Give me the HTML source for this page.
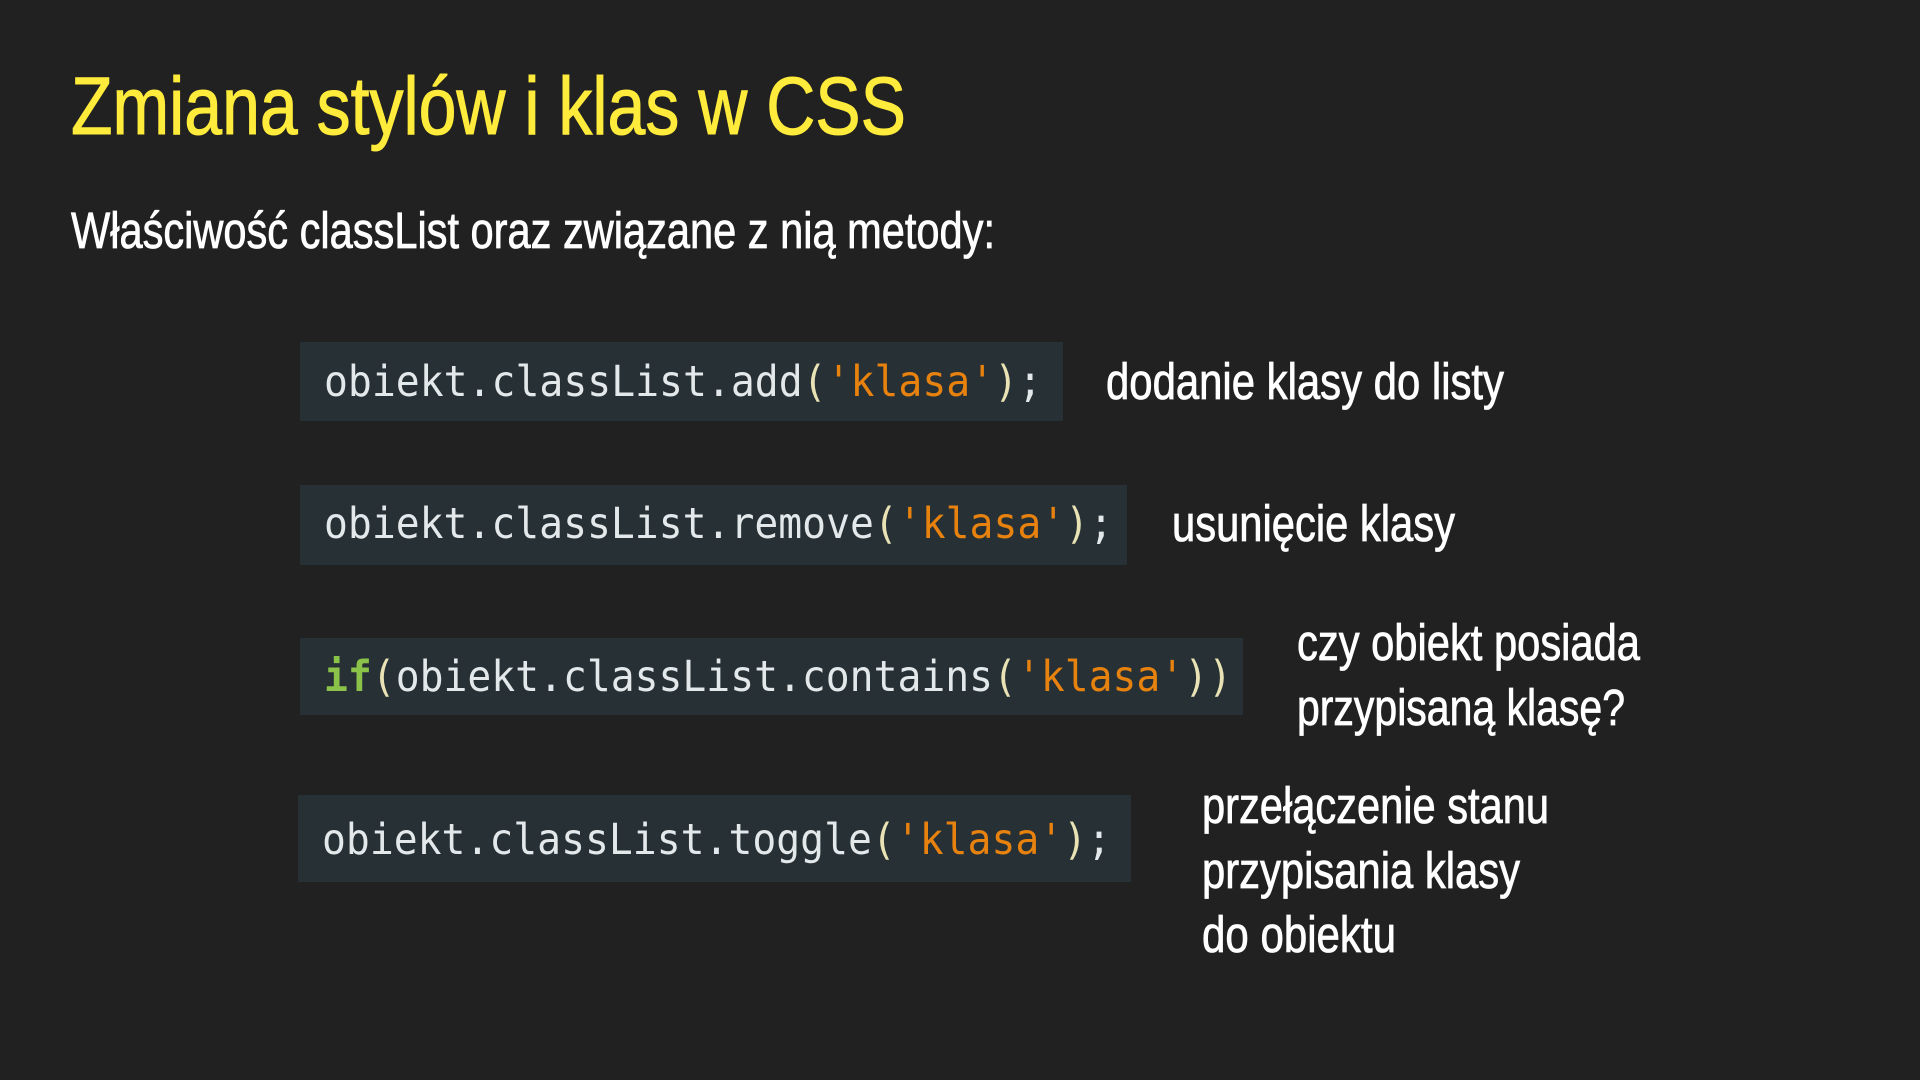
<!DOCTYPE html>
<html><head><meta charset="utf-8"><style>
html,body{margin:0;padding:0;background:#212121;}
svg{display:block}
.s{font-family:"Liberation Sans Narrow","Liberation Sans",sans-serif;fill:#fff;stroke:#fff;stroke-width:0.8px}
.m{font-family:"DejaVu Sans Mono","Liberation Mono",monospace;font-size:43px;fill:#e3e8ea}
.o{fill:#e8820f}.p{fill:#e9e2b4}.g{fill:#8bc34a;font-weight:bold}
</style></head><body>
<svg width="1920" height="1080" viewBox="0 0 1920 1080" xmlns="http://www.w3.org/2000/svg">
<rect width="1920" height="1080" fill="#212121"/>
<text class="s" x="71" y="134" font-size="82" style="fill:#ffeb3b;stroke:#ffeb3b;stroke-width:1px" textLength="835" lengthAdjust="spacingAndGlyphs">Zmiana stylów i klas w CSS</text>
<text class="s" x="71" y="248" font-size="51" textLength="924" lengthAdjust="spacingAndGlyphs">Właściwość classList oraz związane z nią metody:</text>

<rect x="300" y="342" width="763" height="79" fill="#263035"/>
<rect x="300" y="485" width="827" height="80" fill="#263035"/>
<rect x="300" y="638" width="943" height="77" fill="#263035"/>
<rect x="298" y="795" width="833" height="87" fill="#263035"/>

<text class="m" x="324" y="396" textLength="718" lengthAdjust="spacingAndGlyphs">obiekt.classList.add<tspan class="p">(</tspan><tspan class="o">'klasa'</tspan><tspan class="p">)</tspan>;</text>
<text class="m" x="324" y="538" textLength="789" lengthAdjust="spacingAndGlyphs">obiekt.classList.remove<tspan class="p">(</tspan><tspan class="o">'klasa'</tspan><tspan class="p">)</tspan>;</text>
<text class="m" x="324" y="691" textLength="908" lengthAdjust="spacingAndGlyphs"><tspan class="g">if</tspan><tspan class="p">(</tspan>obiekt.classList.contains<tspan class="p">(</tspan><tspan class="o">'klasa'</tspan><tspan class="p">))</tspan></text>
<text class="m" x="322" y="854" textLength="789" lengthAdjust="spacingAndGlyphs">obiekt.classList.toggle<tspan class="p">(</tspan><tspan class="o">'klasa'</tspan><tspan class="p">)</tspan>;</text>

<text class="s" x="1106" y="399" font-size="51" textLength="398" lengthAdjust="spacingAndGlyphs">dodanie klasy do listy</text>
<text class="s" x="1172" y="541" font-size="51" textLength="283" lengthAdjust="spacingAndGlyphs">usunięcie klasy</text>
<text class="s" x="1297" y="660" font-size="51" textLength="343" lengthAdjust="spacingAndGlyphs">czy obiekt posiada</text>
<text class="s" x="1297" y="725" font-size="51" textLength="328" lengthAdjust="spacingAndGlyphs">przypisaną klasę?</text>
<text class="s" x="1202" y="823" font-size="51" textLength="347" lengthAdjust="spacingAndGlyphs">przełączenie stanu</text>
<text class="s" x="1202" y="888" font-size="51" textLength="318" lengthAdjust="spacingAndGlyphs">przypisania klasy</text>
<text class="s" x="1202" y="952" font-size="51" textLength="194" lengthAdjust="spacingAndGlyphs">do obiektu</text>
</svg>
</body></html>
